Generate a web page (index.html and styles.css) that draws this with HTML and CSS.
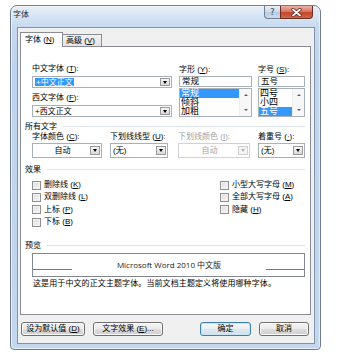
FILE: index.html
```html
<!DOCTYPE html>
<html lang="zh-CN">
<head>
<meta charset="utf-8">
<title>字体</title>
<link rel="stylesheet" href="styles.css">
</head>
<body>
<div class="window">
  <div class="titlebar">
    <span class="title">字体</span>
    <div class="caption-btns">
      <span class="cbtn help">?</span>
      <span class="cbtn close"><svg width="11" height="9" viewBox="0 0 11 9"><path d="M2 1.5 L9 7.5 M9 1.5 L2 7.5" stroke="#5a1e14" stroke-width="3.2" stroke-linecap="round"/><path d="M2 1.5 L9 7.5 M9 1.5 L2 7.5" stroke="#ffffff" stroke-width="1.8" stroke-linecap="round"/></svg></span>
    </div>
  </div>
  <div class="client">
    <div class="tabs">
      <div class="tab active">字体 (<u>N</u>)</div>
      <div class="tab">高级 (<u>V</u>)</div>
    </div>
    <div class="panel">
      <div class="fonts">
        <div class="col-main">
          <div class="lbl">中文字体 (<u>T</u>):</div>
          <div class="combo small"><span class="val"><span class="hl">+中文正文</span></span><span class="drop"></span></div>
          <div class="lbl gap5">西文字体 (<u>F</u>):</div>
          <div class="combo small"><span class="val">+西文正文</span><span class="drop"></span></div>
        </div>
        <div class="col-style">
          <div class="lbl top1">字形 (<u>Y</u>):</div>
          <div class="tbox">常规</div>
          <div class="list">
            <div class="items">
              <div class="item sel">常规</div>
              <div class="item">倾斜</div>
              <div class="item">加粗</div>
            </div>
            <div class="vscroll"><span class="arr up"></span><span class="arr down"></span></div>
          </div>
        </div>
        <div class="col-size">
          <div class="lbl top1">字号 (<u>S</u>):</div>
          <div class="tbox">五号</div>
          <div class="list">
            <div class="items">
              <div class="item">四号</div>
              <div class="item">小四</div>
              <div class="item sel">五号</div>
            </div>
            <div class="vscroll"><span class="arr up"></span><span class="arr down"></span></div>
          </div>
        </div>
      </div>

      <div class="group-head gh-all">所有文字</div>
      <div class="alltext">
        <div class="ac c1">
          <div class="lbl">字体颜色 (<u>C</u>):</div>
          <div class="combo tall"><span class="val center">自动</span><span class="drop"></span></div>
        </div>
        <div class="ac c2">
          <div class="lbl">下划线线型 (<u>U</u>):</div>
          <div class="combo tall"><span class="val">(无)</span><span class="drop"></span></div>
        </div>
        <div class="ac c3 disabled">
          <div class="lbl">下划线颜色 (<u>I</u>):</div>
          <div class="combo tall"><span class="val center">自动</span><span class="drop"></span></div>
        </div>
        <div class="ac c4">
          <div class="lbl">着重号 (<u>·</u>):</div>
          <div class="combo tall"><span class="val">(无)</span><span class="drop"></span></div>
        </div>
      </div>

      <div class="group-head gh-fx">效果</div>
      <div class="checks">
        <label class="chk"><span class="box"></span>删除线 (<u>K</u>)</label>
        <label class="chk"><span class="box"></span>小型大写字母 (<u>M</u>)</label>
        <label class="chk"><span class="box"></span>双删除线 (<u>L</u>)</label>
        <label class="chk"><span class="box"></span>全部大写字母 (<u>A</u>)</label>
        <label class="chk"><span class="box"></span>上标 (<u>P</u>)</label>
        <label class="chk"><span class="box"></span>隐藏 (<u>H</u>)</label>
        <label class="chk"><span class="box"></span>下标 (<u>B</u>)</label>
      </div>

      <div class="group-head gh-pv">预览</div>
      <div class="preview">
        <span class="pline"></span>
        <span class="ptext">Microsoft Word 2010 中文版</span>
        <span class="pline"></span>
      </div>
      <div class="desc">这是用于中文的正文主题字体。当前文档主题定义将使用哪种字体。</div>
    </div>

    <div class="buttons">
      <span class="btn b1">设为默认值 (<u>D</u>)</span>
      <span class="btn b2">文字效果 (<u>E</u>)...</span>
      <span class="btn b3 default">确定</span>
      <span class="btn b4">取消</span>
    </div>
  </div>
</div>
</body>
</html>
```
FILE: styles.css
```css
* { box-sizing: border-box; }
html, body { margin: 0; padding: 0; background: #ffffff; }
body {
  font-family: "Liberation Sans", "Noto Sans CJK SC", sans-serif;
  font-size: 8px;
  line-height: 10px;
  color: #000;
}
u { text-decoration: underline; text-underline-offset: 1px; }

.window {
  margin: 5px 0 0 10px;
  width: 311px;
  height: 345px;
  border: 1px solid #707d8c;
  border-radius: 7px 7px 4px 4px;
  background: linear-gradient(to bottom, #e6eef8 0px, #d4e3f5 12px, #c6d9f0 22px, #bed3ed 60px, #c3d7ef 100%);
  box-shadow: inset 0 0 0 1px rgba(255,255,255,0.55);
}

.titlebar {
  height: 21px;
  display: flex;
  align-items: flex-start;
}
.title {
  padding: 4px 0 0 2px;
  line-height: 10px;
  font-size: 8px;
  color: #1e2a3a;
}
.caption-btns {
  margin-left: auto;
  margin-right: 7px;
  display: flex;
}
.cbtn {
  height: 13px;
  display: flex;
  align-items: center;
  justify-content: center;
}
.help {
  width: 16px;
  border: 1px solid #6f7f94;
  border-top: none;
  border-right: none;
  border-radius: 0 0 0 4px;
  background: linear-gradient(to bottom, #e8eff8 0%, #d0dcec 45%, #b9c9de 55%, #cddaeb 100%);
  color: #3b4a5e;
  font-size: 9px;
  font-family: "DejaVu Sans", sans-serif;
}
.close {
  width: 33px;
  border: 1px solid #6b2f25;
  border-top: none;
  border-radius: 0 0 4px 0;
  background: linear-gradient(to bottom, #eab3a6 0%, #d87863 45%, #c4442b 55%, #d0664b 100%);
}

.client {
  margin: 0 5px 5px 6px;
  width: 298px;
  height: 317px;
  border: 1px solid #7f93ad;
  background: #f0f0f0;
  padding: 4px 0 0 2px;
}

.tabs {
  display: flex;
  align-items: flex-end;
  height: 14px;
}
.tab {
  border: 1px solid #898c95;
  border-bottom: none;
  line-height: 10px;
  white-space: nowrap;
}
.tab.active {
  width: 43px;
  height: 15px;
  margin-bottom: -1px;
  background: #ffffff;
  position: relative;
  z-index: 1;
  padding: 2px 0 0 4px;
}
.tab:not(.active) {
  width: 39px;
  height: 12px;
  border-left: none;
  background: linear-gradient(to bottom, #f3f3f3, #e4e4e4);
  padding: 1px 0 0 3px;
}

.panel {
  width: 291px;
  height: 269px;
  border: 1px solid #898c95;
  background: #ffffff;
  padding: 17px 5px 0 4px;
}

.lbl { line-height: 10px; white-space: nowrap; }
.lbl.gap5 { margin-top: 5px; }
.lbl.top1 { margin-top: 1px; }

.fonts {
  display: flex;
  margin-left: 7px;
  height: 53px;
}
.col-main { width: 140px; }
.col-style { width: 73px; margin-left: 7px; }
.col-size { width: 47px; margin-left: 6px; }

.combo {
  display: flex;
  align-items: stretch;
  border: 1px solid #a9b0b8;
  background: #fff;
  padding: 1px;
}
.combo.small { height: 12px; margin-top: 2px; }
.combo.tall { height: 15px; margin-top: 1px; padding: 2px 1px 2px 1px; }
.combo .val {
  flex: 1;
  display: flex;
  align-items: center;
  padding-left: 1px;
  white-space: nowrap;
  overflow: hidden;
  line-height: 9px;
}
.combo .val.center { justify-content: center; }
.hl { background: #3399ff; color: #fff; padding: 0 1px; }
.drop {
  width: 10px;
  border: 1px solid #9a9a9a;
  background: linear-gradient(to bottom, #f6f6f6, #d9d9d9);
  display: flex;
  align-items: center;
  justify-content: center;
}
.drop::after {
  content: "";
  border-left: 2.5px solid transparent;
  border-right: 2.5px solid transparent;
  border-top: 3px solid #000;
}
.disabled { color: #a3a3a3; }
.disabled .combo { border-color: #cfd3d8; }
.disabled .drop { border-color: #d0d0d0; background: #f4f4f4; }
.disabled .drop::after { border-top-color: #b5b5b5; }

.tbox {
  margin-top: 1px;
  height: 11px;
  border: 1px solid #a9b0b8;
  background: #fff;
  padding-left: 2px;
  line-height: 9px;
  font-size: 8.5px;
}
.list {
  margin-top: 1px;
  height: 29px;
  border: 1px solid #a9b0b8;
  display: flex;
  background: #fff;
}
.items { flex: 1; }
.item {
  height: 9px;
  line-height: 9px;
  font-size: 9px;
  padding-left: 1px;
}
.item.sel { background: #3399ff; color: #fff; }
.vscroll {
  width: 12px;
  background: #f7f7f7;
  border-left: 1px solid #eeeeee;
  display: flex;
  flex-direction: column;
  justify-content: space-between;
  align-items: center;
  padding: 5px 0 5px;
}
.arr {
  width: 0; height: 0;
  border-left: 2px solid transparent;
  border-right: 2px solid transparent;
}
.arr.up { border-bottom: 2px solid #606060; }
.arr.down { border-top: 2px solid #606060; }

.group-head {
  display: flex;
  align-items: center;
  line-height: 10px;
  white-space: nowrap;
}
.group-head::after {
  content: "";
  flex: 1;
  border-top: 1px solid #dde3ea;
  margin-left: 6px;
  margin-top: -2px;
}
.gh-all { margin-top: 5px; }
.gh-fx { margin-top: 7px; }
.gh-pv { margin-top: 13px; }

.alltext {
  display: flex;
  margin-left: 7px;
}
.c1 { width: 70px; }
.c2 { width: 58px; margin-left: 8px; }
.c3 { width: 72px; margin-left: 10px; }
.c4 { width: 47px; margin-left: 8px; }

.checks {
  margin: 4px 0 0 7px;
  display: grid;
  grid-template-columns: 188px 1fr;
  grid-auto-rows: 12.3px;
}
.chk {
  display: flex;
  align-items: center;
  white-space: nowrap;
  line-height: 10px;
}
.box {
  width: 9px;
  height: 9px;
  border: 1px solid #8f8f8f;
  background: linear-gradient(135deg, #dcdcdc, #f8f8f8);
  box-shadow: inset 0 0 0 1px #f3f3f3;
  margin-right: 3px;
}

.preview {
  margin: 2px 0 0 7px;
  width: 273px;
  height: 24px;
  border: 1px solid #828790;
  display: grid;
  grid-template-columns: 39px 1fr 38px;
  align-items: center;
}
.pline {
  height: 1px;
  background: #7a7a7a;
  margin-top: 8px;
}
.ptext {
  text-align: center;
  font-family: "Open Sans", "Noto Sans CJK SC", sans-serif;
  font-size: 8px;
  color: #222;
  white-space: nowrap;
}
.desc {
  margin: 2px 0 0 8px;
  line-height: 10px;
  white-space: nowrap;
  letter-spacing: 0.1px;
}

.buttons {
  display: flex;
  margin-top: 7px;
  padding-left: 1px;
}
.btn {
  height: 14px;
  border: 1px solid #707070;
  border-radius: 3px;
  background: linear-gradient(to bottom, #f3f3f3 0%, #ebebeb 48%, #dddddd 52%, #cfcfcf 100%);
  box-shadow: inset 0 0 0 1px #fbfbfb;
  display: flex;
  align-items: center;
  justify-content: center;
  white-space: nowrap;
  line-height: 10px;
}
.b1 { width: 64px; }
.b2 { width: 70px; margin-left: 8px; }
.b3 { width: 51px; margin-left: 37px; }
.b4 { width: 50px; margin-left: 8px; }
.btn.default {
  border-color: #3c7fb1;
  box-shadow: inset 0 0 0 1px #c8e6f7;
  background: linear-gradient(to bottom, #f4f8fb 0%, #eaf0f5 48%, #dde7ef 52%, #d3e0ea 100%);
}
```
